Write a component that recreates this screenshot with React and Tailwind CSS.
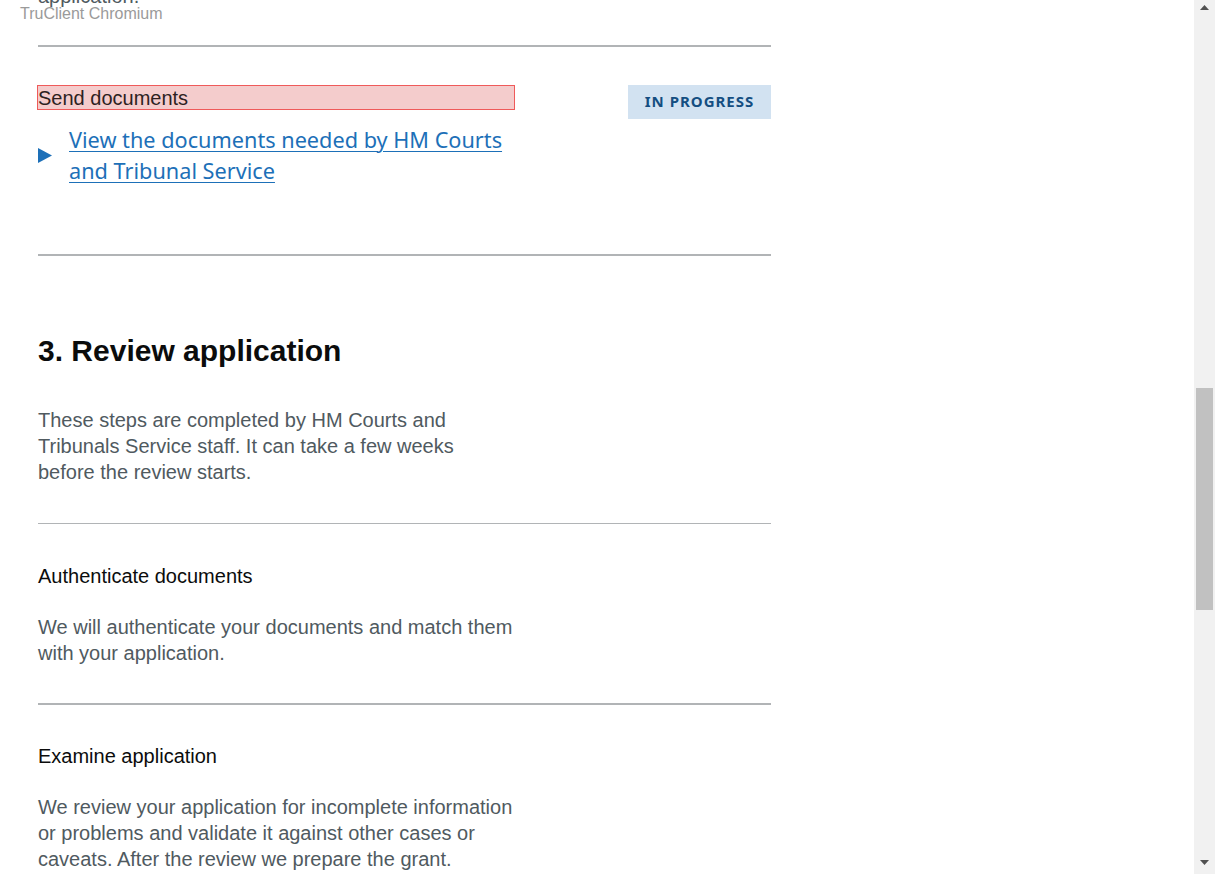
import React from 'react';

const Rule = ({ className = '' }) => <div className={`bg-[#b1b4b6] ${className}`} />;

const Step = ({ title, body, topGap }) => (
  <div>
    <p className={`${topGap} text-[20px] leading-[26px] text-[#0b0c0c]`}>{title}</p>
    <p className="mt-[25px] w-[477px] text-[20px] leading-[26px] text-[#505a5f]">{body}</p>
  </div>
);

const Scrollbar = () => (
  <div className="relative h-full w-[21px] bg-[#f1f1f1]">
    {/* arrows */}
    <svg className="absolute left-[6px] top-[5px]" width="9" height="5" viewBox="0 0 9 5">
      <path d="M0 5 L4.5 0 L9 5 Z" fill="#505050" />
    </svg>
    <div className="absolute left-[2px] top-[388px] h-[222px] w-[17px] bg-[#c1c1c1]" />
    <svg className="absolute left-[6px] bottom-[9px]" width="9" height="5" viewBox="0 0 9 5">
      <path d="M0 0 L9 0 L4.5 5 Z" fill="#505050" />
    </svg>
  </div>
);

export default function App() {
  return (
    <div className="relative flex h-[874px] w-[1215px] overflow-hidden bg-white font-['Liberation_Sans',Arial,sans-serif]">
      <div className="flex-1 overflow-hidden">
        <div className="ml-[38px] w-[733px]">
          <p className="-mt-[17px] text-[20px] leading-[26px] text-[#505a5f]">application.</p>
          <Rule className="mt-[36px] h-[2px]" />

          {/* Send documents task */}
          <div className="mt-[38px] flex items-start justify-between">
            <div className="w-[477px]">
              <div className="-ml-px h-[25px] border border-[#ef5a5a] bg-[#f4cccc] pt-px text-[20px] leading-[22px] text-[#2e1f1f]">
                Send documents
              </div>
              <div className="mt-[14px] flex items-center gap-[17px]">
                <svg width="14" height="15" viewBox="0 0 14 15" className="shrink-0">
                  <path d="M0 0 L14 7.5 L0 15 Z" fill="#1d70b8" />
                </svg>
                <a
                  href="#"
                  className="font-['Noto_Sans',sans-serif] text-[21.7px] leading-[31px] text-[#1d70b8] underline decoration-1 underline-offset-[3px]"
                >
                  View the documents needed by HM Courts and Tribunal Service
                </a>
              </div>
            </div>
            <div className="flex h-[34px] w-[143px] items-center justify-center bg-[#d2e2f1] pb-px font-['Noto_Sans',sans-serif] text-[15px] font-bold tracking-[1px] text-[#144e81]">
              IN PROGRESS
            </div>
          </div>

          <Rule className="mt-[68px] h-[2px]" />

          <h2 className="mt-[77px] text-[30px] font-bold leading-[36px] text-[#0b0c0c]">3. Review application</h2>
          <p className="mt-[38px] w-[477px] text-[20px] leading-[26px] text-[#505a5f]">
            These steps are completed by HM Courts and Tribunals Service staff. It can take a few weeks before the review starts.
          </p>

          <Rule className="mt-[38px] h-px" />
          <Step
            topGap="mt-[39px]"
            title="Authenticate documents"
            body="We will authenticate your documents and match them with your application."
          />

          <Rule className="mt-[37px] h-[2px]" />
          <Step
            topGap="mt-[38px]"
            title="Examine application"
            body="We review your application for incomplete information or problems and validate it against other cases or caveats. After the review we prepare the grant."
          />
        </div>
      </div>
      <Scrollbar />

      <span className="absolute left-[20px] top-[4px] text-[16px] leading-[20px] text-[#9a9a9a]">TruClient Chromium</span>
    </div>
  );
}
